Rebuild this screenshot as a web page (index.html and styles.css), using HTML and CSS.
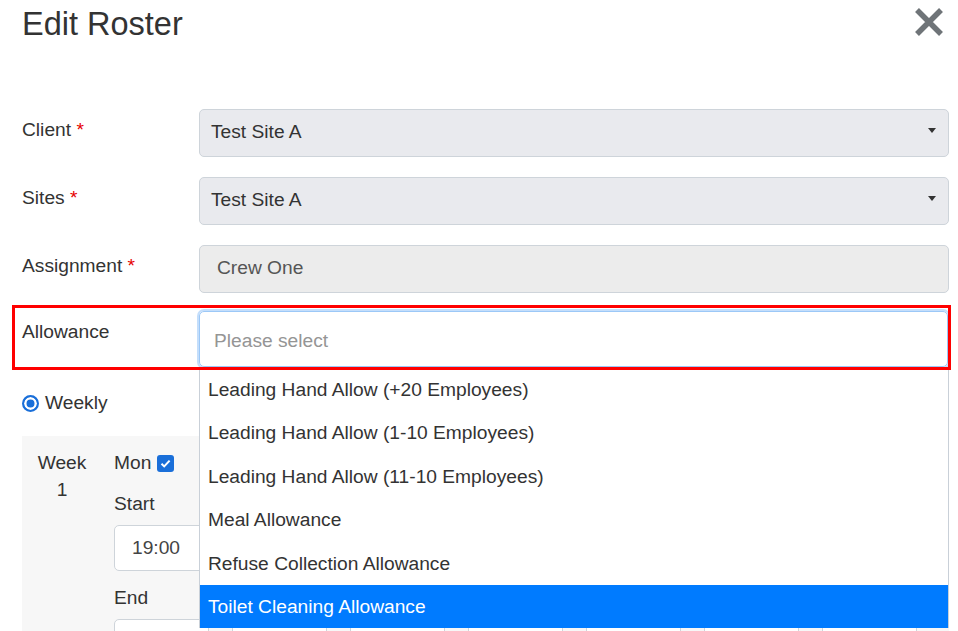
FILE: index.html
```html
<!DOCTYPE html>
<html lang="en">

<head>
    <meta charset="UTF-8">
    <meta name="viewport" content="width=device-width, initial-scale=1.0">
    <title>Edit Roster</title>
    <link rel="stylesheet" href="styles.css">
</head>

<body>
    <div class="modal">
        <div class="modal-header">
            <h1 class="modal-title">Edit Roster</h1>
            <button class="close-btn" type="button" aria-label="Close">
                <svg width="30" height="28" viewBox="0 0 30 28">
                    <path d="M3 2 L27 26 M27 2 L3 26" stroke="#6f7478" stroke-width="5.5" fill="none"/>
                </svg>
            </button>
        </div>

        <form class="roster-form">
            <div class="form-row">
                <label class="form-label">Client <span class="req">*</span></label>
                <div class="select-box">Test Site A<span class="caret"></span></div>
            </div>

            <div class="form-row">
                <label class="form-label">Sites <span class="req">*</span></label>
                <div class="select-box">Test Site A<span class="caret"></span></div>
            </div>

            <div class="form-row">
                <label class="form-label">Assignment <span class="req">*</span></label>
                <div class="readonly-box">Crew One</div>
            </div>

            <div class="form-row allowance-row">
                <label class="form-label">Allowance</label>
                <div class="combo">
                    <div class="combo-input">Please select</div>
                    <ul class="combo-list">
                        <li>Leading Hand Allow (+20 Employees)</li>
                        <li>Leading Hand Allow (1-10 Employees)</li>
                        <li>Leading Hand Allow (11-10 Employees)</li>
                        <li>Meal Allowance</li>
                        <li>Refuse Collection Allowance</li>
                        <li class="active">Toilet Cleaning Allowance</li>
                    </ul>
                </div>
            </div>

            <div class="repeat-row">
                <span class="radio checked"></span>
                <span>Weekly</span>
            </div>

            <div class="week-box">
                <div class="week-label">Week<br>1</div>
                <div class="day">
                    <div class="day-head">Mon <span class="checkbox"><svg width="13" height="13" viewBox="0 0 13 13"><path d="M2.5 6.8 L5.2 9.4 L10.6 3.6" stroke="#fff" stroke-width="2" fill="none"/></svg></span></div>
                    <div class="time-label">Start</div>
                    <div class="time-input">19:00</div>
                    <div class="time-label">End</div>
                    <div class="time-input"></div>
                </div>
                <!-- other days sit under the open dropdown -->
                <div class="day">
                    <div class="day-head"></div>
                    <div class="time-label"></div>
                    <div class="time-input"></div>
                    <div class="time-label"></div>
                    <div class="time-input"></div>
                </div>
                <div class="day">
                    <div class="day-head"></div>
                    <div class="time-label"></div>
                    <div class="time-input"></div>
                    <div class="time-label"></div>
                    <div class="time-input"></div>
                </div>
                <div class="day">
                    <div class="day-head"></div>
                    <div class="time-label"></div>
                    <div class="time-input"></div>
                    <div class="time-label"></div>
                    <div class="time-input"></div>
                </div>
                <div class="day">
                    <div class="day-head"></div>
                    <div class="time-label"></div>
                    <div class="time-input"></div>
                    <div class="time-label"></div>
                    <div class="time-input"></div>
                </div>
                <div class="day">
                    <div class="day-head"></div>
                    <div class="time-label"></div>
                    <div class="time-input"></div>
                    <div class="time-label"></div>
                    <div class="time-input"></div>
                </div>
                <div class="day">
                    <div class="day-head"></div>
                    <div class="time-label"></div>
                    <div class="time-input"></div>
                    <div class="time-label"></div>
                    <div class="time-input"></div>
                </div>
            </div>
        </form>
    </div>
</body>

</html>
```

FILE: styles.css
```css
body {
    margin: 0;
    padding: 0;
    font-family: "Liberation Sans", Arial, sans-serif;
    font-size: 19.2px;
    color: #333;
    background-color: #fff;
    overflow: hidden;
}

.modal {
    padding: 0 9px 0 22px;
}

.modal-header {
    display: flex;
    justify-content: space-between;
    align-items: flex-start;
    height: 43px;
    padding-top: 5px;
    box-sizing: border-box;
}

.modal-title {
    margin: 0;
    font-size: 32.5px;
    font-weight: normal;
    line-height: 38px;
    color: #333;
}

.close-btn {
    margin: 3px 5px 0 0;
    padding: 0;
    border: none;
    background: none;
    cursor: pointer;
}

.roster-form {
    padding-top: 66px;
}

.form-row {
    display: flex;
    margin-bottom: 20px;
}

.form-label {
    width: 177px;
    flex-shrink: 0;
    padding-top: 7px;
    line-height: 28px;
}

.req {
    color: #e60000;
}

.select-box,
.readonly-box {
    flex: 1;
    display: flex;
    align-items: center;
    height: 48px;
    box-sizing: border-box;
    border: 1px solid #ced4da;
    border-radius: 5px;
    padding: 0 0 2px 11px;
    position: relative;
}

.select-box {
    background-color: #e9eaee;
}

.readonly-box {
    background-color: #ececec;
    color: #555;
    padding-left: 17px;
}

.caret {
    position: absolute;
    right: 12px;
    top: 18px;
    border-left: 4px solid transparent;
    border-right: 4px solid transparent;
    border-top: 5px solid #333;
}

/* highlighted row - red frame drawn over the open list */
.allowance-row {
    position: relative;
    margin: -8px -2px 0 -10px;
    padding: 3px 0 0 7px;
    border: 3px solid transparent;
}

.allowance-row::after {
    content: '';
    position: absolute;
    top: -3px;
    left: -3px;
    right: -3px;
    bottom: -3px;
    border: 3px solid #ff0000;
    z-index: 20;
    pointer-events: none;
}

.combo {
    flex: 1;
    position: relative;
}

.combo-input {
    height: 56px;
    box-sizing: border-box;
    border: 1px solid #9cc8f7;
    border-radius: 5px;
    box-shadow: 0 0 0 2px #c4defb;
    padding: 3px 0 0 14px;
    display: flex;
    align-items: center;
    color: #959595;
}

.combo-list {
    position: absolute;
    left: 0;
    right: -1px;
    top: calc(100% + 1px);
    margin: 0;
    padding: 0;
    list-style: none;
    background-color: #fff;
    border-left: 1px solid #c9d0d8;
    border-right: 1px solid #c9d0d8;
    z-index: 10;
}

.combo-list li {
    height: 43.4px;
    line-height: 43.4px;
    padding-left: 8px;
    color: #333;
}

.combo-list li.active {
    background-color: #007bff;
    color: #fff;
}

.repeat-row {
    display: flex;
    align-items: center;
    margin-top: 19px;
    height: 28px;
    gap: 6px;
}

.radio {
    width: 13px;
    height: 13px;
    border: 2px solid #1a6fd9;
    border-radius: 50%;
    background-color: #1a6fd9;
    box-shadow: inset 0 0 0 2.5px #fff;
}

.week-box {
    display: flex;
    margin-top: 19px;
    padding-top: 13px;
    background-color: #f7f7f7;
    height: 300px;
}

.week-label {
    width: 80px;
    margin-right: 12px;
    text-align: center;
    line-height: 27px;
}

.day {
    width: 118px;
    flex-shrink: 0;
}

.day-head {
    display: flex;
    align-items: center;
    gap: 6px;
    height: 28px;
}

.checkbox {
    display: inline-flex;
    align-items: center;
    justify-content: center;
    width: 17px;
    height: 17px;
    border-radius: 3px;
    background-color: #1a6fd9;
}

.time-label {
    margin-top: 13px;
    line-height: 28px;
    min-height: 28px;
}

.time-input {
    margin-top: 7px;
    width: 95px;
    height: 46px;
    box-sizing: border-box;
    border: 1px solid #ced4da;
    border-radius: 5px;
    background-color: #fff;
    padding-left: 17px;
    display: flex;
    align-items: center;
    color: #444;
}
```
